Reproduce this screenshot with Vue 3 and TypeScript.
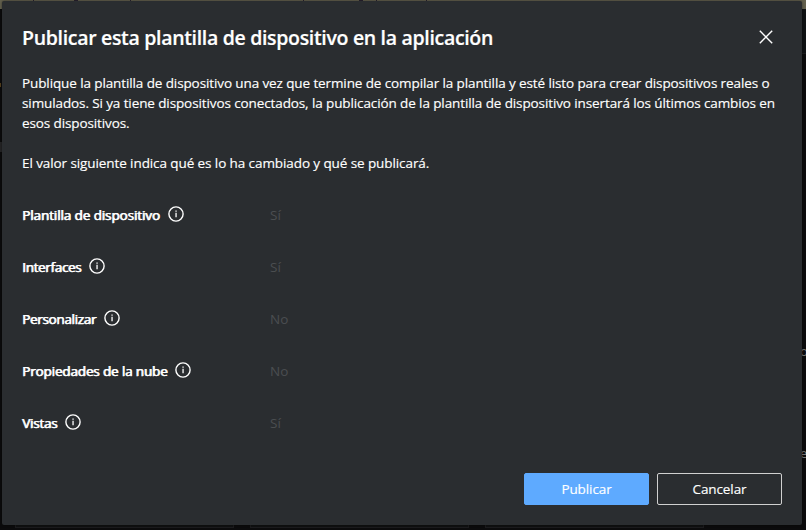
<script setup lang="ts">
interface Change {
  label: string
  value: string
  key: string
}

const description: string[] = [
  'Publique la plantilla de dispositivo una vez que termine de compilar la plantilla y esté listo para crear dispositivos reales o',
  'simulados. Si ya tiene dispositivos conectados, la publicación de la plantilla de dispositivo insertará los últimos cambios en',
  'esos dispositivos.',
]

const changes: Change[] = [
  { key: 'template', label: 'Plantilla de dispositivo', value: 'Sí' },
  { key: 'interfaces', label: 'Interfaces', value: 'Sí' },
  { key: 'customize', label: 'Personalizar', value: 'No' },
  { key: 'cloud', label: 'Propiedades de la nube', value: 'No' },
  { key: 'views', label: 'Vistas', value: 'Sí' },
]
</script>

<template>
  <div class="backdrop">
    <div class="topbar">
      <i class="tick t1"></i><i class="tick t2"></i><i class="tick t3"></i><i class="tick t4"></i>
      <i class="tick t5"></i><i class="tick t6"></i><i class="tick t7"></i>
    </div>
    <i class="edge e1"></i><i class="edge e2"></i><i class="edge e3"></i>
    <i class="panel p1"></i><i class="panel p2"></i><i class="panel p3"></i>
    <span class="peek k1">o</span>
    <span class="peek k2">e</span>
    <section class="dialog" role="dialog">
      <header class="head">
        <h1 class="title">Publicar esta plantilla de dispositivo en la aplicación</h1>
        <button class="close" type="button">
          <svg width="14" height="14" viewBox="0 0 14 14">
            <path d="M0.8 0.8L13.2 13.2M13.2 0.8L0.8 13.2" stroke="#fff" stroke-width="1.4" fill="none" />
          </svg>
        </button>
      </header>
      <p class="text">
        <span v-for="(line, i) in description" :key="i" class="line">{{ line }}</span>
      </p>
      <p class="text">
        <span class="line summary">El valor siguiente indica qué es lo ha cambiado y qué se publicará.</span>
      </p>
      <div class="rows">
        <div v-for="c in changes" :key="c.key" class="row">
          <div class="name">
            <span :class="['label', c.key]">{{ c.label }}</span>
            <svg class="info" width="16" height="16" viewBox="0 0 16 16">
              <circle cx="8" cy="8" r="7.1" fill="none" stroke="#fff" stroke-width="1.4" />
              <path d="M7.4 4.4h1.3v1.3H7.4zM7.4 6.7h1.3v4.6H7.4z" fill="#fff" />
            </svg>
          </div>
          <span class="value">{{ c.value }}</span>
        </div>
      </div>
      <footer class="actions">
        <button class="btn primary" type="button">Publicar</button>
        <button class="btn" type="button">Cancelar</button>
      </footer>
    </section>
  </div>
</template>

<style>
body {
  background: #0c0c0d;
  overflow: hidden;
}
</style>

<style scoped>
.backdrop {
  position: relative;
  box-sizing: border-box;
  width: 806px;
  height: 530px;
  padding: 1px 4px 5px 2px;
  overflow: hidden;
  background: #0b0b0c;
  font-family: "Open Sans", "Noto Sans", sans-serif;
}
.topbar {
  position: absolute;
  inset: 0 0 auto 0;
  height: 9px;
  background: #64614e;
}
.tick {
  position: absolute;
  top: 0;
  width: 1px;
  height: 1px;
  background: #2a2230;
}
.t1 { left: 33px; }
.t2 { left: 74px; width: 4px; }
.t3 { left: 130px; }
.t4 { left: 303px; }
.t5 { left: 359px; width: 4px; }
.t6 { left: 376px; }
.t7 { left: 426px; }
.edge {
  position: absolute;
}
.e1 { left: 802px; top: 9px; width: 4px; height: 44px; background: #101214; border-bottom: 1px solid #1c1c1e; }
.e2 { left: 0; top: 142px; width: 2px; height: 10px; background: #252526; }
.e3 { left: 0; top: 83px; width: 1px; height: 4px; background: #55401c; }
.panel {
  position: absolute;
  top: 516px;
  height: 10px;
  border: 1px solid #1b1b1d;
  background: #101112;
}
.p1 { left: 15px; width: 217px; }
.p2 { left: 250px; width: 217px; }
.p3 { left: 485px; width: 217px; }
.peek {
  position: absolute;
  left: 800px;
  font-size: 13px;
  line-height: 16px;
  color: #7a7a7a;
}
.k1 { top: 343px; }
.k2 { top: 445px; }
.dialog {
  position: relative;
  display: flex;
  flex-direction: column;
  box-sizing: border-box;
  height: 524px;
  padding: 20px;
  border-radius: 2px;
  background: #2a2d30;
  box-shadow: 0 0 3px rgba(0, 0, 0, 0.5);
  color: #fff;
}
.head {
  display: flex;
  justify-content: space-between;
  align-items: center;
  height: 32px;
}
.title {
  margin: 0;
  padding-top: 2px;
  font-size: 19.5px;
  font-weight: 600;
  line-height: 28px;
  letter-spacing: -0.32px;
  white-space: nowrap;
  -webkit-text-stroke: 0.2px #fff;
}
.close {
  display: flex;
  margin: 0 9px 0 0;
  padding: 0;
  border: 0;
  background: none;
}
.text {
  margin: 20px 0 0;
  font-size: 13.5px;
  line-height: 20px;
  letter-spacing: -0.107px;
  -webkit-text-stroke: 0.15px #fff;
}
.line {
  display: block;
  width: max-content;
  white-space: nowrap;
}
.summary {
  letter-spacing: -0.09px;
}
.rows {
  display: flex;
  flex-direction: column;
  gap: 32px;
  margin-top: 32px;
}
.row {
  display: grid;
  grid-template-columns: 248px 1fr;
  align-items: center;
  height: 20px;
  font-size: 13.5px;
  line-height: 20px;
}
.name {
  display: flex;
  align-items: center;
  gap: 8px;
}
.label {
  white-space: nowrap;
  letter-spacing: -0.1px;
  text-shadow: 0.7px 0 0 #fff;
  -webkit-text-stroke: 0.25px #fff;
}
.interfaces { letter-spacing: -0.33px; }
.customize { letter-spacing: -0.32px; }
.cloud { letter-spacing: -0.15px; }
.views { letter-spacing: -0.25px; }
.info {
  margin-bottom: 2px;
}
.value {
  color: #4b4e50;
}
.actions {
  display: flex;
  justify-content: flex-end;
  gap: 8px;
  margin-top: auto;
}
.btn {
  box-sizing: border-box;
  width: 125px;
  height: 32px;
  padding: 0;
  border: 1px solid #d0d0d0;
  border-radius: 2px;
  background: transparent;
  color: #fff;
  font: 400 13.5px/20px "Open Sans", "Noto Sans", sans-serif;
  letter-spacing: -0.1px;
  -webkit-text-stroke: 0.15px #fff;
}
.primary {
  border-color: #5eaaff;
  background: #5eaaff;
}
</style>
